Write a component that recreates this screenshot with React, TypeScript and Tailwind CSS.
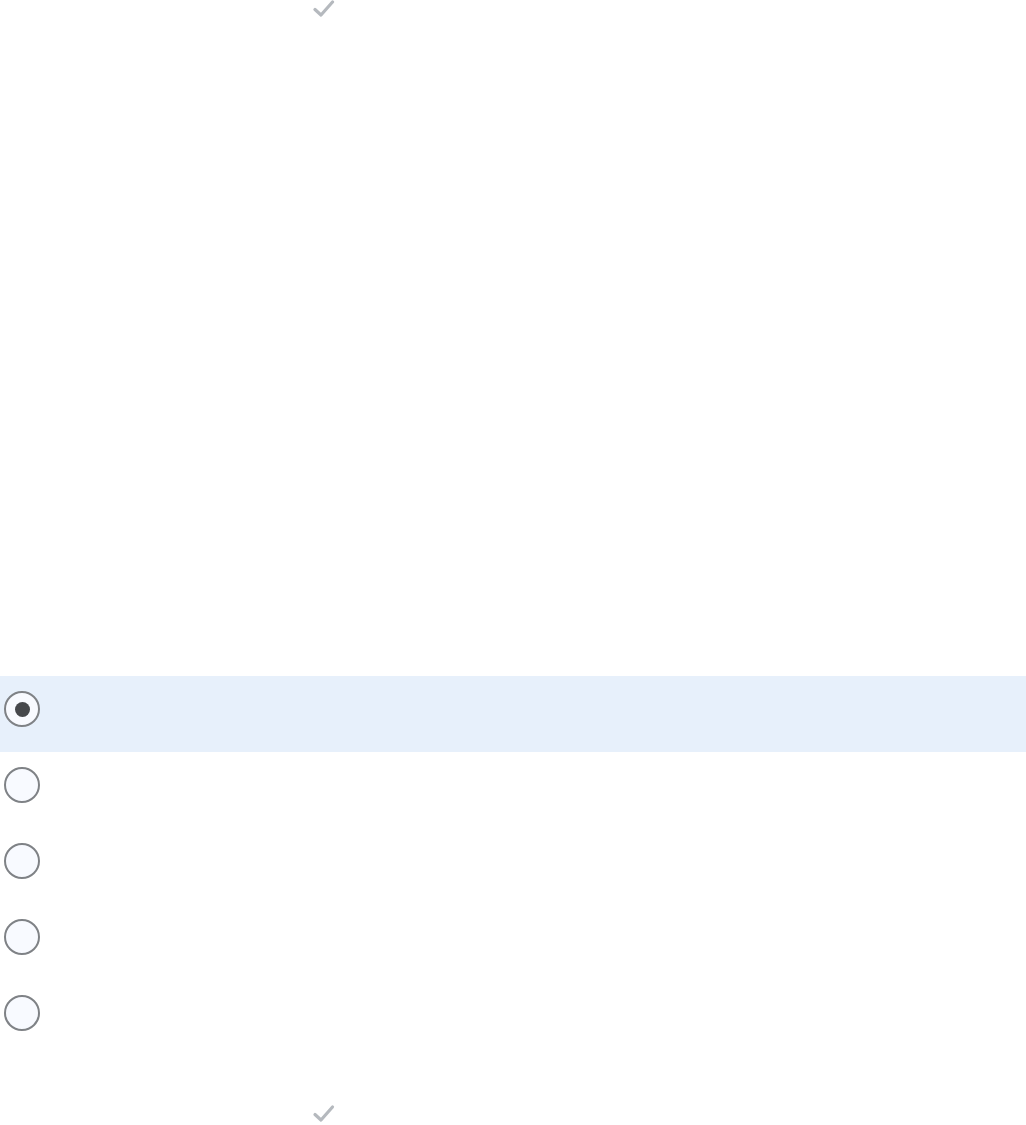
import React from 'react';

const Check = () => (
  <svg width="26" height="22" viewBox="0 0 26 22" className="block">
    <polyline
      points="5,11.5 11,17 22.5,4"
      fill="none"
      stroke="#b5b9be"
      strokeWidth="3.2"
      strokeLinecap="round"
      strokeLinejoin="round"
    />
  </svg>
);

const options = [true, false, false, false, false];

export default function App() {
  return (
    <div className="w-[1026px] h-[1125px] bg-white overflow-hidden flex flex-col">
      <div className="h-[20px] pl-[310px]">
        <div className="-mt-[2px]">
          <Check />
        </div>
      </div>

      <div className="mt-[656px] flex flex-col">
        {options.map((selected, i) => (
          <div
            key={i}
            className={`h-[76px] pt-[15px] pl-[4px] ${selected ? 'bg-[#e7f0fb]' : 'bg-white'}`}
          >
            <div className="w-[36px] h-[36px] rounded-full border-2 border-[#7f8286] bg-[#f8faff] flex items-center justify-center">
              {selected && <div className="w-[15px] h-[15px] rounded-full bg-[#46484c]" />}
            </div>
          </div>
        ))}
      </div>

      <div className="mt-[47px] pl-[310px]">
        <Check />
      </div>
    </div>
  );
}
